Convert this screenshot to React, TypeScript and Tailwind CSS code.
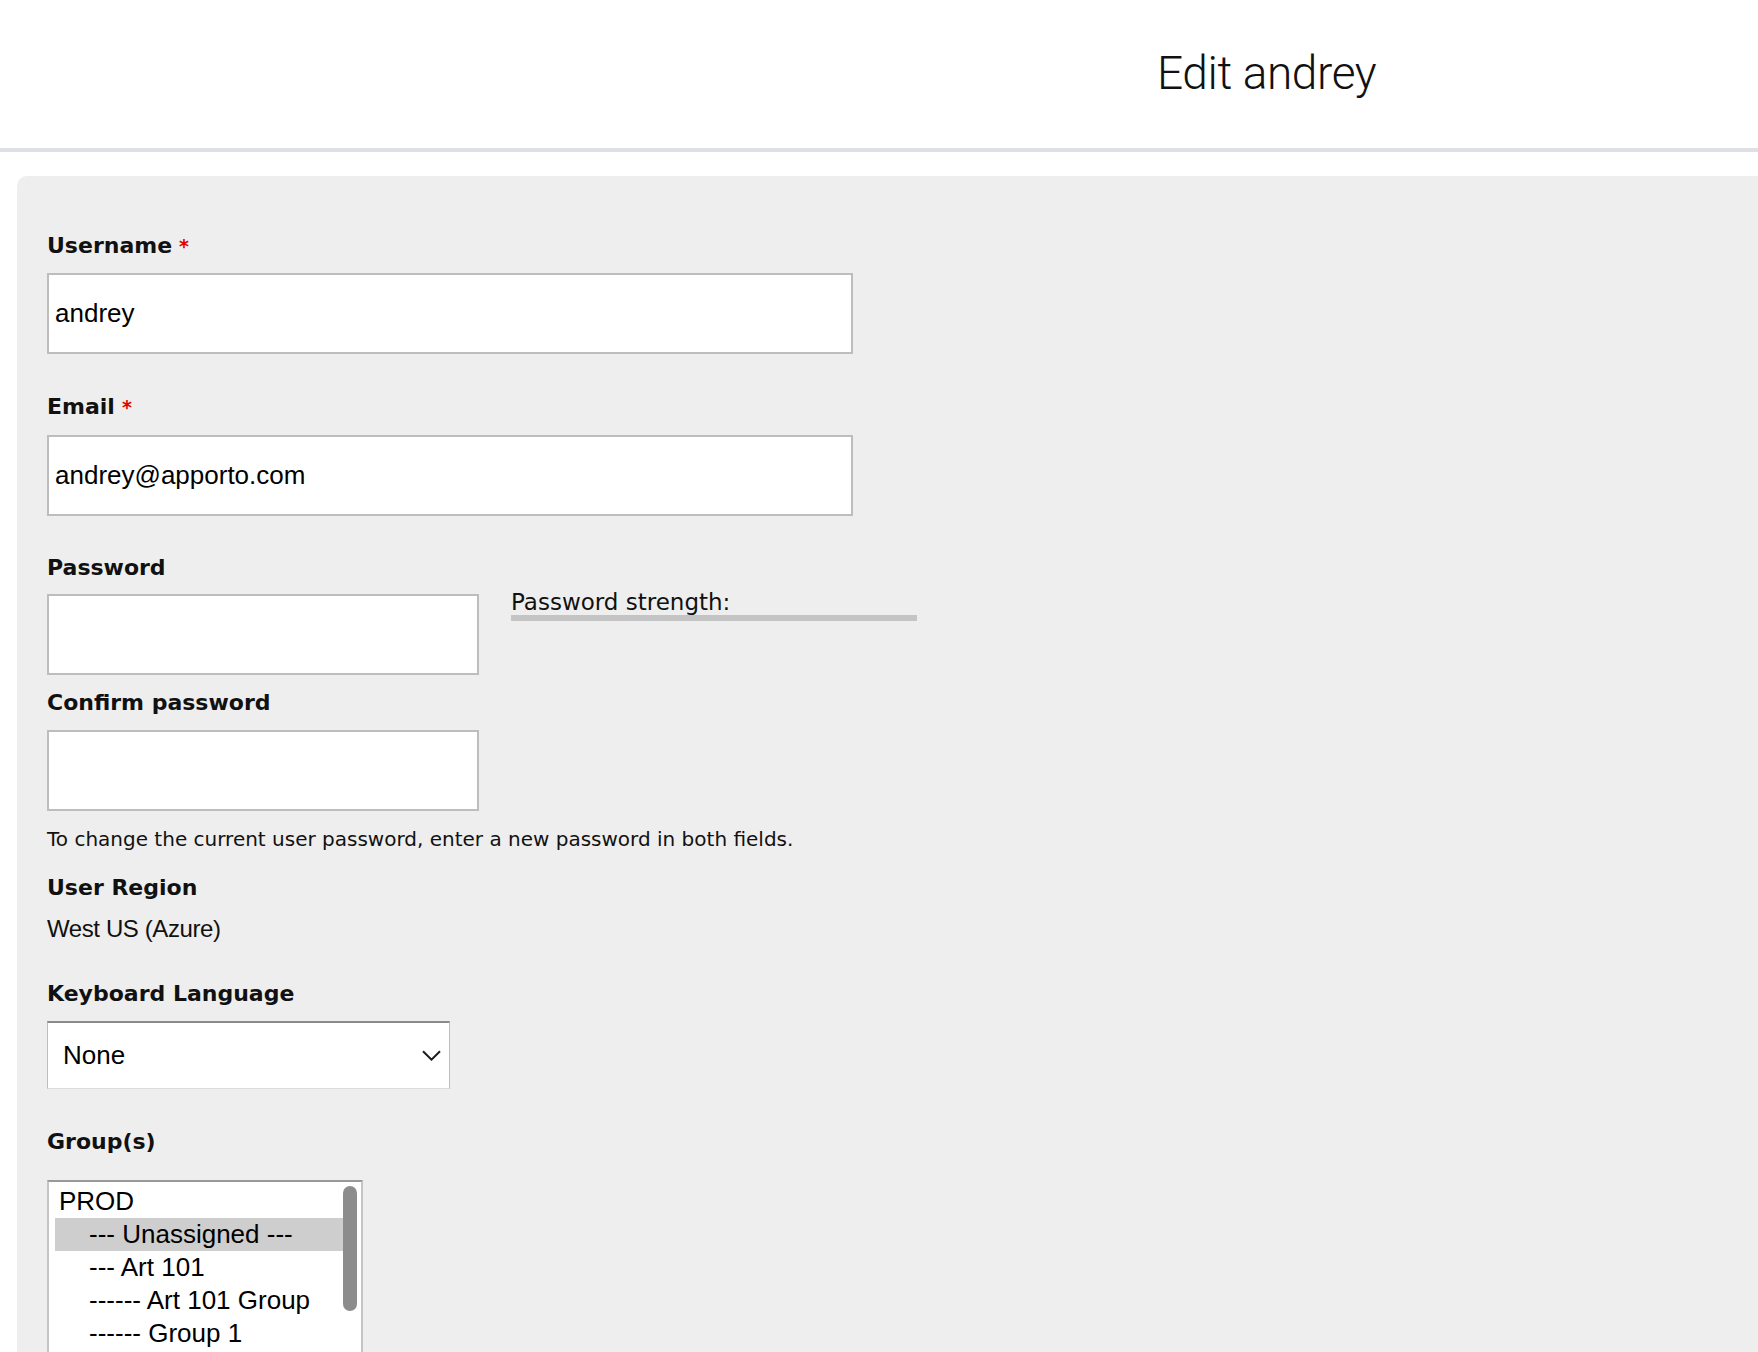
import React from "react";

// ========== Constants ==========

const LABEL = "font-['DejaVu_Sans',Verdana,sans-serif] font-bold text-[22px] leading-[28px] text-[#111]";
const FIELD_TEXT = "font-['Liberation_Sans',Arial,Helvetica,sans-serif] text-[26px] text-black";

const GROUP_OPTIONS = [
  { label: "--- Unassigned ---", selected: true },
  { label: "--- Art 101" },
  { label: "------ Art 101 Group" },
  { label: "------ Group 1" },
];

// ========== Pieces ==========

function Label({ text, required }: { text: string; required?: boolean }) {
  return (
    <div className={LABEL}>
      {text}
      {required && <span className="ml-[7px] text-[19px] align-top text-[#e00000]">*</span>}
    </div>
  );
}

function TextInput({ value, width, type = "text" }: { value?: string; width: string; type?: string }) {
  return (
    <input
      type={type}
      defaultValue={value}
      className={`${width} h-[81px] bg-white border-2 border-[#bdbdbd] px-[6px] outline-none ${FIELD_TEXT}`}
    />
  );
}

function Chevron() {
  return (
    <svg width="19" height="11" viewBox="0 0 19 11" fill="none">
      <path d="M1 1.2 L9.5 9.6 L18 1.2" stroke="#1a1a1a" strokeWidth="2" />
    </svg>
  );
}

// ========== Main Component ==========

export default function App() {
  return (
    <div className="min-h-screen bg-white">
      {/* header */}
      <div className="h-[152px] pl-[1157px] pt-[50px] border-b-4 border-[#dde1e6]">
        <h1 className="font-['Roboto','Liberation_Sans',sans-serif] font-light text-[46px] leading-[46px] tracking-[-0.4px] text-[#111]">
          Edit andrey
        </h1>
      </div>

      {/* form panel */}
      <div className="mt-[24px] ml-[17px] rounded-tl-[10px] bg-[#eeeeee] pl-[30px] pt-[56px] pb-[30px]">
        <Label text="Username" required />
        <div className="mt-[13px]">
          <TextInput value="andrey" width="w-[806px]" />
        </div>

        <div className="mt-[39px]">
          <Label text="Email" required />
        </div>
        <div className="mt-[14px]">
          <TextInput value="andrey@apporto.com" width="w-[806px]" />
        </div>

        <div className="mt-[38px]">
          <Label text="Password" />
        </div>
        <div className="mt-[12px] flex items-start gap-[32px]">
          <TextInput type="password" width="w-[432px]" />
          <div className="-mt-[2px]">
            <div className="font-['DejaVu_Sans',Verdana,sans-serif] text-[23px] leading-[20px] text-[#111]">
              Password strength:
            </div>
            <div className="mt-[3px] h-[6px] w-[406px] bg-[#c4c4c4]" />
          </div>
        </div>

        <div className="mt-[14px]">
          <Label text="Confirm password" />
        </div>
        <div className="mt-[13px]">
          <TextInput type="password" width="w-[432px]" />
        </div>

        <p className="mt-[16px] font-['DejaVu_Sans',Verdana,sans-serif] text-[20px] leading-[24px] text-[#111]">
          To change the current user password, enter a new password in both fields.
        </p>

        <div className="mt-[23px]">
          <Label text="User Region" />
        </div>
        <div className="mt-[13px] font-['Liberation_Sans',Arial,sans-serif] text-[24px] leading-[28px] tracking-[-0.4px] text-[#111]">
          West US (Azure)
        </div>

        <div className="mt-[37px]">
          <Label text="Keyboard Language" />
        </div>
        <div className="mt-[13px] flex h-[68px] w-[403px] items-center justify-between bg-white border-t-2 border-t-[#8a8a8a] border-x border-x-[#bdbdbd] border-b border-b-[#dcdcdc] pl-[15px] pr-[8px]">
          <span className={FIELD_TEXT}>None</span>
          <Chevron />
        </div>

        <div className="mt-[39px]">
          <Label text="Group(s)" />
        </div>
        <div className="relative mt-[24px] w-[316px] bg-white border-t-2 border-t-[#999] border-x-2 border-x-[#c4c4c4] pt-[3px] pb-[40px] pl-[6px] pr-[18px]">
          <div className={`${FIELD_TEXT} leading-[33px] pl-[4px]`}>PROD</div>
          {GROUP_OPTIONS.map((o) => (
            <div
              key={o.label}
              className={`${FIELD_TEXT} leading-[33px] pl-[34px] whitespace-nowrap ${o.selected ? "bg-[#cecece]" : ""}`}
            >
              {o.label}
            </div>
          ))}
          {/* scrollbar thumb */}
          <div className="absolute right-[4px] top-[4px] h-[125px] w-[14px] rounded-full bg-[#8c8c8c]" />
        </div>
      </div>
    </div>
  );
}
